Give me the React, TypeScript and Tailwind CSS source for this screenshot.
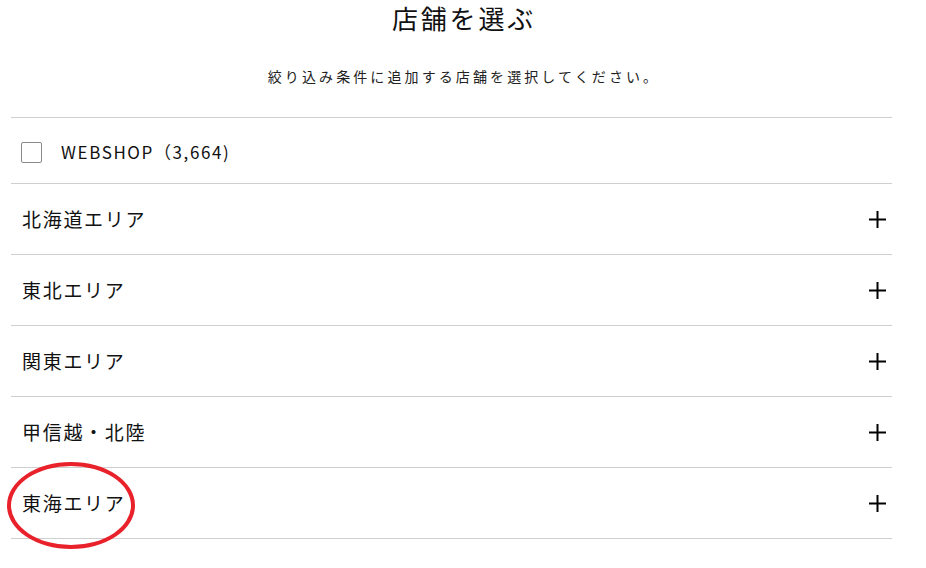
const areas = ["北海道エリア", "東北エリア", "関東エリア", "甲信越・北陸", "東海エリア"];

function PlusIcon() {
  return (
    <svg width="17" height="17" viewBox="0 0 17 17" className="text-black">
      <path d="M8.5 0v17M0 8.5h17" stroke="currentColor" strokeWidth="2" />
    </svg>
  );
}

export default function App() {
  return (
    <div
      className="w-[926px] h-[568px] overflow-hidden bg-white text-[#111]"
      style={{ fontFamily: '"Noto Sans CJK JP", "Noto Sans", sans-serif' }}
    >
      <h1 className="pt-[1px] pl-[2px] text-center text-[26px] leading-[34px] tracking-[2.8px] font-normal">
        店舗を選ぶ
      </h1>
      <p className="mt-[31px] pl-[2px] text-center text-[14px] leading-[20px] tracking-[3.1px] text-[#222]">
        絞り込み条件に追加する店舗を選択してください。
      </p>

      <div className="ml-[11px] mt-[31px] w-[881px] border-t border-[#cfcfcf]">
        <div className="flex h-[66px] items-center border-b border-[#cfcfcf] pl-[10px] pt-[3px]">
          <span className="h-[21px] w-[21px] rounded-[2px] border border-[#8a8a8a] bg-white" />
          <span className="ml-[19px] text-[17px] leading-[24px] tracking-[1.6px] text-[#111]">
            WEBSHOP（3,664)
          </span>
        </div>

        {areas.map((a, i) => (
          <div
            key={a}
            className="relative flex h-[71px] items-center justify-between border-b border-[#cfcfcf] pl-[11px] pr-[6px]"
          >
            <span className="text-[19px] tracking-[1.7px] text-[#111]">{a}</span>
            <PlusIcon />
            {i === 4 && (
              <span className="pointer-events-none absolute left-[-4px] top-[-6px] h-[87px] w-[128px] rounded-[50%] border-[4px] border-[#e8212b]" />
            )}
          </div>
        ))}
      </div>
    </div>
  );
}
